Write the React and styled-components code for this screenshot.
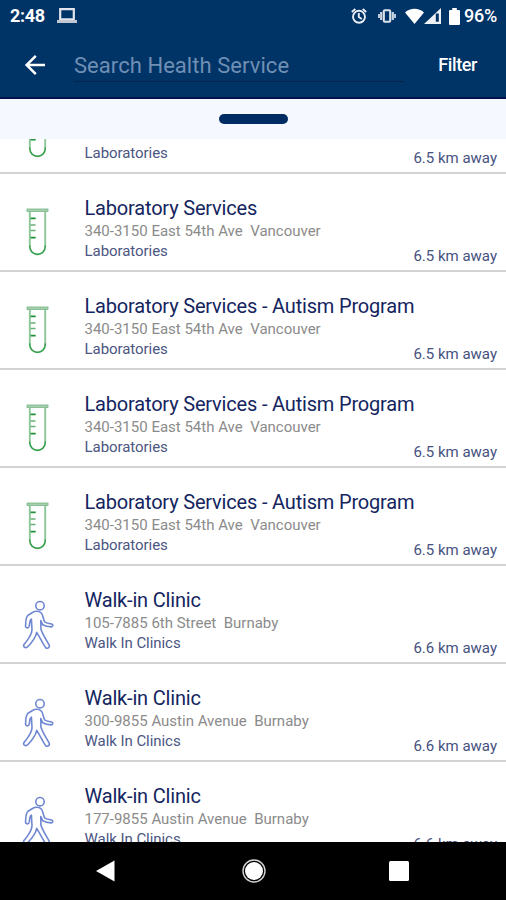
import React from 'react'
import styled, { createGlobalStyle } from 'styled-components'

const GlobalStyle = createGlobalStyle`
  * {
    box-sizing: border-box;
  }
  body {
    margin: 0;
    background: #ffffff;
    font-family: Roboto, 'Liberation Sans', sans-serif;
  }
`

const Screen = styled.div`
  width: 506px;
  height: 900px;
  display: flex;
  flex-direction: column;
  overflow: hidden;
  background: #ffffff;
`

const Header = styled.header`
  height: 99px;
  flex-shrink: 0;
  background: #003366;
  border-bottom: 2px solid #00124e;
  color: #ffffff;
`

const StatusBar = styled.div`
  height: 32px;
  display: flex;
  justify-content: space-between;
  padding: 0 9px 0 10px;
`

const StatusGroup = styled.div`
  display: flex;
  align-items: center;
`

const StatusText = styled.span`
  margin-left: ${({ $gap }) => $gap || 0}px;
  font-size: 18px;
  line-height: 32px;
  font-weight: ${({ $bold }) => ($bold ? 700 : 500)};
  letter-spacing: ${({ $bold }) => ($bold ? '-0.3px' : '-0.2px')};
`

const StatusIcon = styled.svg`
  display: block;
  flex-shrink: 0;
  margin-left: ${({ $gap }) => $gap}px;
`

const SearchBar = styled.div`
  height: 65px;
  display: flex;
  align-items: flex-start;
  padding: 0 29px 0 24px;
`

const BackButton = styled.button`
  display: block;
  width: 22px;
  height: 65px;
  padding: 0;
  border: none;
  background: none;
  cursor: pointer;

  svg {
    display: block;
  }
`

const SearchInput = styled.input`
  width: 330px;
  height: 33px;
  margin: 17px 0 0 28px;
  padding: 0;
  border: none;
  border-bottom: 1px solid #052349;
  outline: none;
  background: transparent;
  color: #ffffff;
  font-family: inherit;
  font-size: 22px;
  letter-spacing: 0.05px;

  &::placeholder {
    color: #6f8fb5;
    opacity: 1;
  }
`

const FilterButton = styled.button`
  height: 65px;
  margin-left: auto;
  padding: 0;
  border: none;
  background: none;
  color: #ffffff;
  font-family: inherit;
  font-size: 18px;
  font-weight: 500;
  letter-spacing: -0.4px;
  cursor: pointer;
`

const DragHandle = styled.div`
  height: 40px;
  flex-shrink: 0;
  display: flex;
  justify-content: center;
  align-items: center;
  background: #f5f9ff;

  &::after {
    content: '';
    width: 69px;
    height: 10px;
    margin-left: 1px;
    border-radius: 5px;
    background: #002c63;
  }
`

const List = styled.ul`
  flex: 1;
  min-height: 0;
  margin: 0;
  padding: 0;
  list-style: none;
  overflow: hidden;
`

// the list is scrolled so that its first row is partly hidden
const Row = styled.li`
  height: 98px;
  display: flex;
  border-bottom: 2px solid #d3d3d3;
  background: #ffffff;

  &:first-child {
    margin-top: -63px;
  }
`

const IconCell = styled.div`
  width: 84.5px;
  flex-shrink: 0;
  padding: ${({ $type }) => ($type === 'lab' ? '34px 0 0 26px' : '34px 0 0 22px')};

  svg {
    display: block;
  }
`

const Info = styled.div`
  flex: 1;
  min-width: 0;
  padding-top: 22px;
  white-space: pre;
`

const Title = styled.div`
  height: 25px;
  font-size: 20px;
  line-height: 24px;
  letter-spacing: -0.18px;
  color: #14255f;
`

const Address = styled.div`
  height: 20px;
  font-size: 15px;
  line-height: 21px;
  color: #8b8b8b;
`

const Category = styled.div`
  height: 20px;
  font-size: 15px;
  line-height: 21px;
  letter-spacing: -0.05px;
  color: #4b5682;
`

const Distance = styled.div`
  flex-shrink: 0;
  align-self: flex-end;
  margin: 0 9px 4px 0;
  font-size: 15px;
  line-height: 20px;
  white-space: nowrap;
  color: #465180;
`

const NavBar = styled.nav`
  height: 58px;
  flex-shrink: 0;
  display: flex;
  align-items: center;
  background: #000000;

  svg {
    display: block;
  }
`

const NavButton = styled.button`
  display: block;
  margin: 0 0 0 ${({ $gap }) => $gap}px;
  padding: 0;
  border: none;
  background: none;
`

const services = [
  { type: 'lab', name: 'Laboratory Services', address: '340-3150 East 54th Ave  Vancouver', distance: '6.5' },
  { type: 'lab', name: 'Laboratory Services', address: '340-3150 East 54th Ave  Vancouver', distance: '6.5' },
  { type: 'lab', name: 'Laboratory Services - Autism Program', address: '340-3150 East 54th Ave  Vancouver', distance: '6.5' },
  { type: 'lab', name: 'Laboratory Services - Autism Program', address: '340-3150 East 54th Ave  Vancouver', distance: '6.5' },
  { type: 'lab', name: 'Laboratory Services - Autism Program', address: '340-3150 East 54th Ave  Vancouver', distance: '6.5' },
  { type: 'walk', name: 'Walk-in Clinic', address: '105-7885 6th Street  Burnaby', distance: '6.6' },
  { type: 'walk', name: 'Walk-in Clinic', address: '300-9855 Austin Avenue  Burnaby', distance: '6.6' },
  { type: 'walk', name: 'Walk-in Clinic', address: '177-9855 Austin Avenue  Burnaby', distance: '6.6' },
]

const TubeIcon = () => (
  <svg width='23' height='48' viewBox='0 0 23 48' fill='none'>
    <rect x='1' y='1' width='21' height='2.4' fill='#a5cfae' stroke='#75b582' strokeWidth='0.8' />
    <path d='M3.8 4v34.5M19.2 4v34.5' stroke='#8cc699' strokeWidth='1.9' />
    <path d='M3.8 37.5v1.2a7.7 7.7 0 0 0 15.4 0v-1.2' stroke='#36a04d' strokeWidth='1.6' />
    <path d='M4.5 10.3h5.2M4.5 29.7h5.2' stroke='#219238' strokeWidth='1.7' />
    <path d='M4.5 17h5M4.5 22.5h5' stroke='#65b073' strokeWidth='1.5' />
  </svg>
)

const WalkIcon = () => (
  <svg width='32' height='50' viewBox='0 0 32 50' fill='none' stroke='#7088d2' strokeWidth='1.6' strokeLinejoin='round'>
    <circle cx='18' cy='5.7' r='4.2' />
    <path d='M10.5 12.5 C13 10.8 17.5 10.8 19.5 13.2 C21.5 15.7 21 20 23 22.2 C25 23.6 27.5 23.3 30 24.2 C31.3 25 30.8 26.5 29.4 26.9 C26.5 26.8 23.5 26.5 20.8 24.8 L18.8 20.5 L18.9 29 C20.5 34.5 24.5 40 27.2 45.2 C28 47.3 25.4 49.3 23.6 47.6 C20.5 43.2 18 37.5 14.7 32.4 C13.5 38.2 9.5 43 5.2 47.2 C3.2 48.5 .7 46.6 2 44.5 C5.7 39.8 9.7 35.7 10 29.7 L9.4 19.1 C6.7 20.5 8.4 24.7 6.8 27.1 C5.8 28.5 3.6 27.8 3.5 26.1 C4 22.2 3.2 18.1 6 15.2 Z' />
  </svg>
)

const ServiceRow = ({ service }) => {
  const isLab = service.type === 'lab'
  return (
    <Row>
      <IconCell $type={service.type}>{isLab ? <TubeIcon /> : <WalkIcon />}</IconCell>
      <Info>
        <Title>{service.name}</Title>
        <Address>{service.address}</Address>
        <Category>{isLab ? 'Laboratories' : 'Walk In Clinics'}</Category>
      </Info>
      <Distance>{service.distance} km away</Distance>
    </Row>
  )
}

const App = () => {
  return (
    <Screen>
      <GlobalStyle />
      <Header>
        <StatusBar>
          <StatusGroup>
            <StatusText $bold>2:48</StatusText>
            <StatusIcon $gap={12} width='20' height='16' viewBox='0 0 20 16'>
              <path d='M3.2 1.2h13.6v10.2H3.2z' fill='none' stroke='#e3e5ec' strokeWidth='2.2' />
              <path d='M0 12h20v3H0z' fill='#c3c7d1' />
            </StatusIcon>
          </StatusGroup>
          <StatusGroup>
            <StatusIcon $gap={0} width='16' height='16' viewBox='0 0 16 16' fill='none' stroke='#e9edf5' strokeWidth='1.9'>
              <circle cx='8' cy='8.8' r='6' />
              <path d='M.8 4 4.3 1M15.2 4 11.7 1M7.8 5v4l3 2' />
            </StatusIcon>
            <StatusIcon $gap={11} width='18' height='16' viewBox='0 0 18 16'>
              <rect x='5.8' y='2.2' width='6.4' height='11.6' rx='1' fill='none' stroke='#dce3ec' strokeWidth='2.1' />
              <path d='M3.2 4v8M14.8 4v8' stroke='#c9d4e1' strokeWidth='2.2' />
              <path d='M1 6v4M17 6v4' stroke='#b9c7d8' strokeWidth='2' />
            </StatusIcon>
            <StatusIcon $gap={9} width='19' height='17' viewBox='0 0 19 17'>
              <path d='M0 4.4C5.3-.4 13.7-.4 19 4.4L9.5 16z' fill='#fff' />
            </StatusIcon>
            <StatusIcon $gap={0} width='17' height='16' viewBox='0 0 17 16'>
              <path fillRule='evenodd' d='M17 0v16H0zM14.8 5.6h-3v8.2h3z' fill='#eef1f6' />
            </StatusIcon>
            <StatusIcon $gap={8} width='11' height='17' viewBox='0 0 11 17'>
              <path d='M3.2 0h4.6v2H10q1 0 1 1v13q0 1-1 1H1q-1 0-1-1V3q0-1 1-1h2.2z' fill='#fff' />
            </StatusIcon>
            <StatusText $gap={4}>96%</StatusText>
          </StatusGroup>
        </StatusBar>
        <SearchBar>
          <BackButton aria-label='Back'>
            <svg width='22' height='22' viewBox='0 0 22 22' fill='none' stroke='#fff' strokeWidth='2.5'>
              <path d='M21 11H3M11.8 1.8 2.6 11l9.2 9.2' />
            </svg>
          </BackButton>
          <SearchInput placeholder='Search Health Service' />
          <FilterButton>Filter</FilterButton>
        </SearchBar>
      </Header>
      <DragHandle />
      <List>
        {services.map((service, i) => (
          <ServiceRow key={i} service={service} />
        ))}
      </List>
      <NavBar>
        <NavButton $gap={96} aria-label='Back'>
          <svg width='19' height='22' viewBox='0 0 19 22'>
            <path d='M0 11 18.5.5v21z' fill='#fff' />
          </svg>
        </NavButton>
        <NavButton $gap={127} aria-label='Home'>
          <svg width='24' height='24' viewBox='0 0 24 24'>
            <circle cx='12' cy='12' r='11' fill='none' stroke='#d5d5d5' strokeWidth='1.4' />
            <circle cx='12' cy='12' r='9' fill='#fff' />
          </svg>
        </NavButton>
        <NavButton $gap={123} aria-label='Recent apps'>
          <svg width='20' height='20' viewBox='0 0 20 20'>
            <rect width='20' height='20' rx='1.5' fill='#fff' />
          </svg>
        </NavButton>
      </NavBar>
    </Screen>
  )
}

export default App
